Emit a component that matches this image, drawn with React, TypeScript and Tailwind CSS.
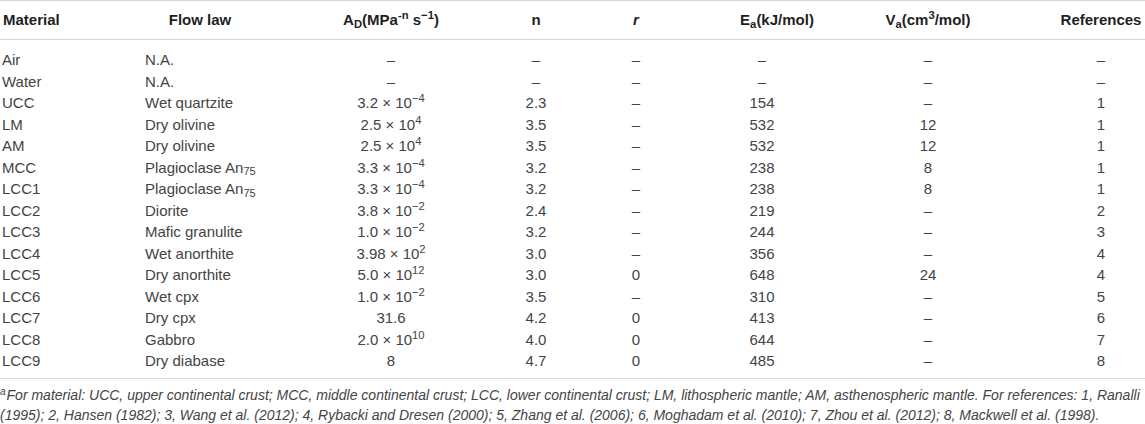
import React from "react";

const cols =
  "grid grid-cols-[145px_110px_208px_123px_120px_146px_162px_131px] items-center";

type Row = {
  material: string;
  flow: React.ReactNode;
  ad: React.ReactNode;
  n: string;
  r: string;
  ea: string;
  va: string;
  ref: string;
};

const D = "–";

const pow = (base: string, exp: string) => (
  <>
    {base} × 10<sup>{exp}</sup>
  </>
);

const An75 = (
  <>
    Plagioclase An<sub className="text-[11px]">75</sub>
  </>
);

const rows: Row[] = [
  { material: "Air", flow: "N.A.", ad: D, n: D, r: D, ea: D, va: D, ref: D },
  { material: "Water", flow: "N.A.", ad: D, n: D, r: D, ea: D, va: D, ref: D },
  { material: "UCC", flow: "Wet quartzite", ad: pow("3.2", "−4"), n: "2.3", r: D, ea: "154", va: D, ref: "1" },
  { material: "LM", flow: "Dry olivine", ad: pow("2.5", "4"), n: "3.5", r: D, ea: "532", va: "12", ref: "1" },
  { material: "AM", flow: "Dry olivine", ad: pow("2.5", "4"), n: "3.5", r: D, ea: "532", va: "12", ref: "1" },
  { material: "MCC", flow: An75, ad: pow("3.3", "−4"), n: "3.2", r: D, ea: "238", va: "8", ref: "1" },
  { material: "LCC1", flow: An75, ad: pow("3.3", "−4"), n: "3.2", r: D, ea: "238", va: "8", ref: "1" },
  { material: "LCC2", flow: "Diorite", ad: pow("3.8", "−2"), n: "2.4", r: D, ea: "219", va: D, ref: "2" },
  { material: "LCC3", flow: "Mafic granulite", ad: pow("1.0", "−2"), n: "3.2", r: D, ea: "244", va: D, ref: "3" },
  { material: "LCC4", flow: "Wet anorthite", ad: pow("3.98", "2"), n: "3.0", r: D, ea: "356", va: D, ref: "4" },
  { material: "LCC5", flow: "Dry anorthite", ad: pow("5.0", "12"), n: "3.0", r: "0", ea: "648", va: "24", ref: "4" },
  { material: "LCC6", flow: "Wet cpx", ad: pow("1.0", "−2"), n: "3.5", r: D, ea: "310", va: D, ref: "5" },
  { material: "LCC7", flow: "Dry cpx", ad: "31.6", n: "4.2", r: "0", ea: "413", va: D, ref: "6" },
  { material: "LCC8", flow: "Gabbro", ad: pow("2.0", "10"), n: "4.0", r: "0", ea: "644", va: D, ref: "7" },
  { material: "LCC9", flow: "Dry diabase", ad: "8", n: "4.7", r: "0", ea: "485", va: D, ref: "8" },
];

export default function App() {
  return (
    <div className="w-[1145px] h-[424px] bg-white overflow-hidden font-['Liberation_Sans',Arial,sans-serif] text-[15px] text-[#444]">
      {/* Header */}
      <div className={`${cols} h-[40px] border-t border-b border-[#d6d6d6] font-bold text-[#1f1f1f]`}>
        <div className="pl-[3px]">Material</div>
        <div className="text-center">Flow law</div>
        <div className="pl-[64px] text-center whitespace-nowrap">
          A<sub>D</sub>(MPa<sup>-n</sup> s<sup>−1</sup>)
        </div>
        <div className="pl-[23px] text-center">n</div>
        <div className="pr-[20px] text-center italic">r</div>
        <div className="pr-[4px] text-center whitespace-nowrap">
          E<sub>a</sub>(kJ/mol)
        </div>
        <div className="pr-[10px] text-center whitespace-nowrap">
          V<sub>a</sub>(cm<sup>3</sup>/mol)
        </div>
        <div className="pl-[43px] text-center">References</div>
      </div>

      {/* Body */}
      <div className="pt-[9px] pb-[6px] border-b border-[#d6d6d6]">
        {rows.map((r) => (
          <div key={r.material} className={`${cols} h-[21.5px] leading-[21.5px]`}>
            <div className="pl-[2px]">{r.material}</div>
            <div className="whitespace-nowrap">{r.flow}</div>
            <div className="pl-[64px] text-center whitespace-nowrap">{r.ad}</div>
            <div className="pl-[23px] text-center">{r.n}</div>
            <div className="pr-[20px] text-center">{r.r}</div>
            <div className="pr-[34px] text-center">{r.ea}</div>
            <div className="pr-[10px] text-center">{r.va}</div>
            <div className="pl-[43px] text-center">{r.ref}</div>
          </div>
        ))}
      </div>

      {/* Footnote */}
      <p className="pt-[6px] text-[14px] leading-[20px] italic text-[#444]">
        <sup className="text-[10px] mr-[1px]">a</sup>For material: UCC, upper continental crust; MCC, middle
        continental crust; LCC, lower continental crust; LM, lithospheric mantle; AM, asthenospheric mantle.
        For references: 1, Ranalli (1995); 2, Hansen (1982); 3, Wang et al. (2012); 4, Rybacki and Dresen
        (2000); 5, Zhang et al. (2006); 6, Moghadam et al. (2010); 7, Zhou et al. (2012); 8, Mackwell et al.
        (1998).
      </p>
    </div>
  );
}
